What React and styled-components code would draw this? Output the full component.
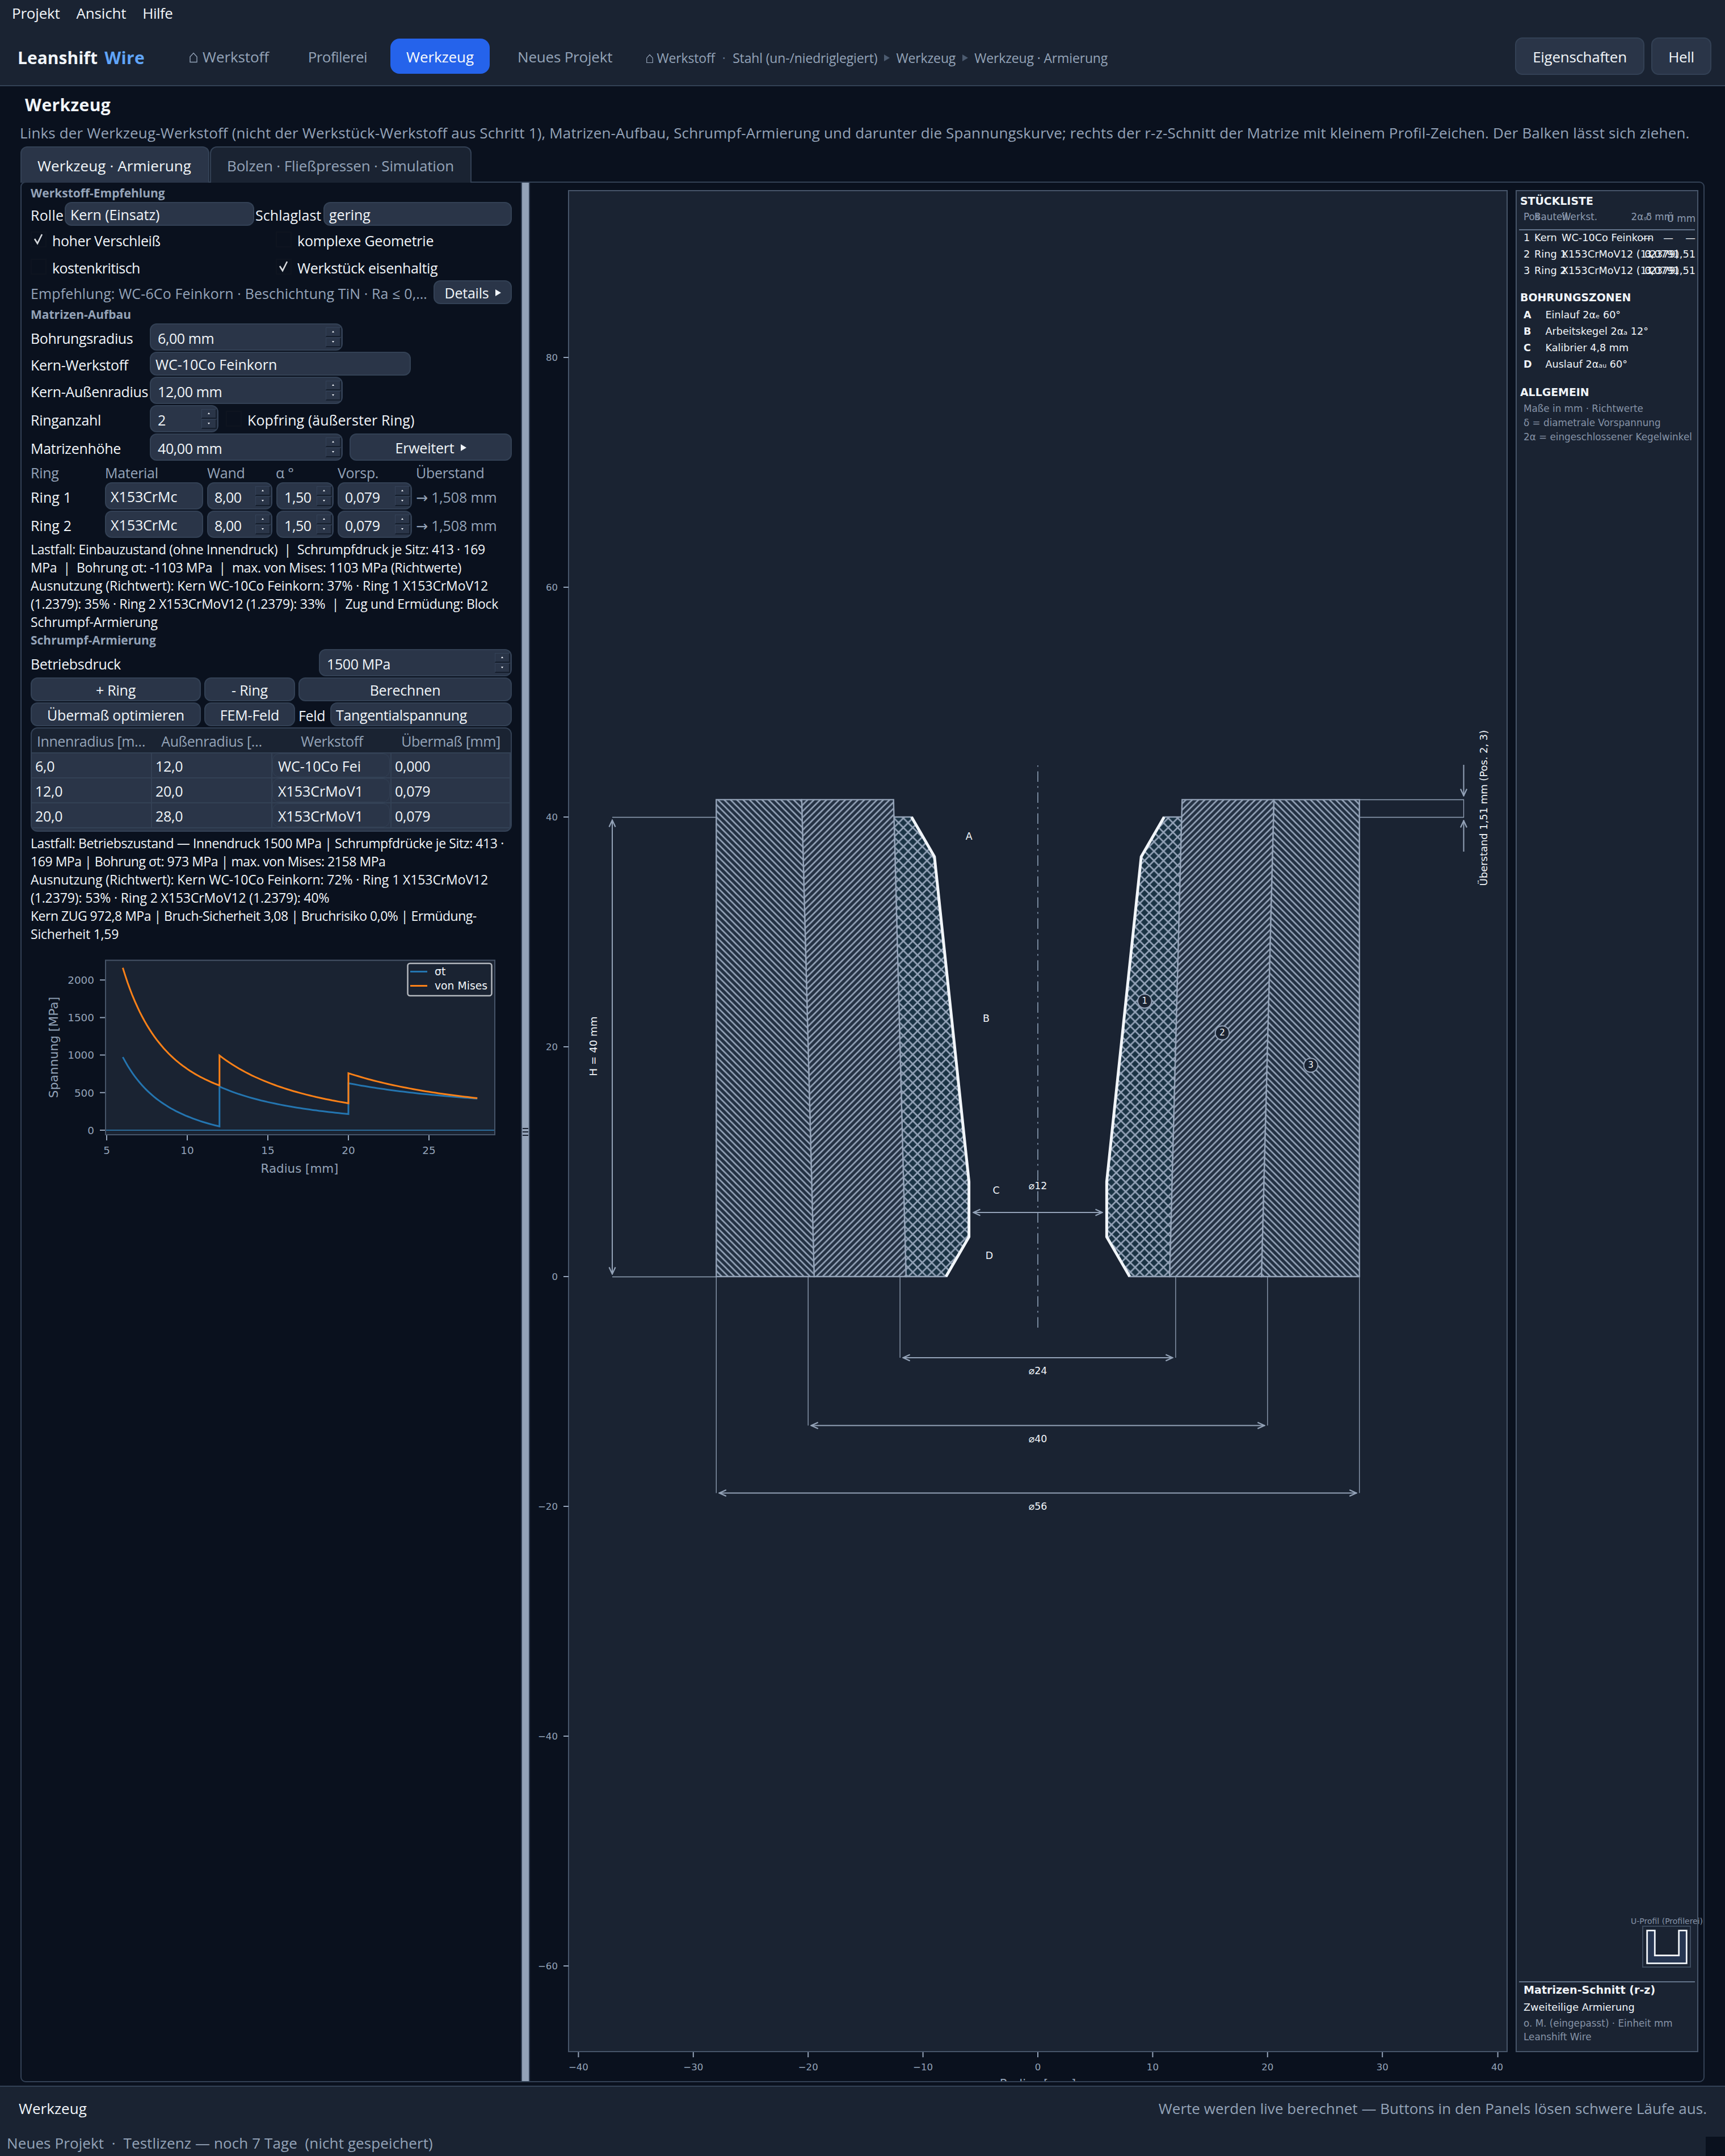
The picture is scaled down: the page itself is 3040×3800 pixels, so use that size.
import styled, { createGlobalStyle } from "styled-components";

const GlobalStyle = createGlobalStyle`
  * {
    box-sizing: border-box;
  }

  body {
    margin: 0;
    background: #0a111e;
    color: #f1f5f9;
    font-family: "Open Sans", "Noto Sans", "DejaVu Sans", sans-serif;
    font-size: 26px;
  }
`;

/* Window frame */
const Window = styled.div`
  width: 3040px;
  height: 3800px;
  display: flex;
  flex-direction: column;
  overflow: hidden;
  white-space: pre;
`;

const MenuBar = styled.div`
  height: 48px;
  padding: 0 0 2px 21px;
  display: flex;
  align-items: center;
  gap: 29px;
  background: #1a2332;
`;

const MenuItem = styled.span`
  letter-spacing: ${(props) => props.$ls || -0.2}px;
`;

const NavBar = styled.nav`
  height: 104px;
  padding: 0 24px 0 31px;
  display: flex;
  align-items: center;
  background: #1a2332;
  border-bottom: 2px solid #334155;
`;

const Brand = styled.div`
  width: 257px;
  font-size: 30px;
  font-weight: 700;
  letter-spacing: 0;
  padding-top: 4px;

  span {
    color: #60a5fa;
    margin-left: 4px;
    letter-spacing: 0.4px;
  }
`;

const NavItem = styled.div`
  height: 62px;
  padding: 2px ${(props) => props.$pad || 28}px 0;
  margin-right: ${(props) => props.$gap || 12}px;
  display: flex;
  align-items: center;
  border-radius: 16px;
  letter-spacing: ${(props) => props.$ls || -0.1}px;
  background: ${(props) => (props.$active ? "#2563eb" : "transparent")};
  color: ${(props) => (props.$active ? "#f8fafc" : "#94a3b8")};
`;

const House = styled.svg`
  width: ${(props) => props.$size || 16}px;
  height: ${(props) => (props.$size || 16) + 3}px;
  margin: 3px ${(props) => props.$gap || 8}px 0 0;
  fill: none;
  stroke: #94a3b8;
  stroke-width: 1.4;
`;

const Crumbs = styled.div`
  display: flex;
  align-items: center;
  flex: 1;
  font-size: 23px;
  color: #94a3b8;
  letter-spacing: -0.15px;
  padding-top: 5px;
`;

const CrumbDot = styled.span`
  width: 31px;
  text-align: center;
  color: #64748b;
`;

const CrumbArrow = styled.span`
  width: 0;
  height: 0;
  margin: 0 11px 0 12px;
  border-left: 10px solid #4c5b70;
  border-top: 6px solid transparent;
  border-bottom: 6px solid transparent;
`;

const TopButton = styled.button`
  height: 66px;
  width: ${(props) => props.$w}px;
  margin-left: 12px;
  padding: 1px 0 0;
  border: 2px solid #334155;
  border-radius: 13px;
  background: #2a3548;
  color: #f1f5f9;
  font: inherit;
  letter-spacing: -0.3px;
`;

const PageTitle = styled.h1`
  margin: 0;
  padding-left: 44px;
  height: 64px;
  line-height: 66px;
  font-size: 30px;
  letter-spacing: 0.4px;
`;

const Lead = styled.p`
  margin: 0 0 6px;
  padding-left: 35px;
  height: 36px;
  line-height: 36px;
  color: #94a3b8;
  letter-spacing: 0.15px;
`;

/* Tabs and the framed pane below them */
const Tabs = styled.div`
  position: relative;
  z-index: 1;
  display: flex;
  gap: 1px;
  height: 64px;
  padding-left: 36px;
`;

const Tab = styled.div`
  width: ${(props) => props.$w}px;
  padding: 2px 0 0 28px;
  line-height: 60px;
  border: 2px solid #334155;
  border-bottom: 0;
  border-radius: 12px 12px 0 0;
  background: ${(props) => (props.$active ? "#2a3548" : "#1a2332")};
  color: ${(props) => (props.$active ? "#f1f5f9" : "#94a3b8")};
  letter-spacing: ${(props) => (props.$active ? 0.1 : -0.16)}px;
`;

const Pane = styled.main`
  height: 3350px;
  margin: -2px 36px 6px;
  display: flex;
  border: 2px solid #334155;
  border-radius: 9px;
  overflow: hidden;
`;

const Controls = styled.section`
  width: 880px;
  padding: 0 16px;
  font-size: 25px;
  letter-spacing: -0.25px;
`;

const SectionTitle = styled.h2`
  margin: 0;
  height: 34px;
  line-height: 36px;
  font-size: 21px;
  letter-spacing: 0;
  color: #94a3b8;
`;

const FormRow = styled.div`
  display: grid;
  grid-template-columns: ${(props) => props.$cols};
  height: ${(props) => props.$h || 48}px;
  margin-bottom: ${(props) => (props.$flush ? 0 : 2)}px;
  align-items: center;
`;

const Label = styled.span`
  padding-top: 3px;
  letter-spacing: ${(props) => props.$ls || -0.3}px;
  padding-left: ${(props) => props.$pad || 0}px;
  color: ${(props) => (props.$muted ? "#94a3b8" : "#f1f5f9")};
`;

const Select = styled.div`
  height: ${(props) => props.$h || 42}px;
  width: ${(props) => (props.$w ? `${props.$w}px` : "auto")};
  padding: 2px 30px 0 8px;
  display: flex;
  align-items: center;
  border: 2px solid #334155;
  border-radius: 12px;
  background: #2a3548;
  letter-spacing: ${(props) => props.$ls || -0.05}px;
`;

const SpinBox = styled.div`
  height: 48px;
  width: ${(props) => props.$w}px;
  padding: 0 1px 0 ${(props) => props.$pad || 12}px;
  display: flex;
  align-items: center;
  justify-content: space-between;
  border: 2px solid #334155;
  border-radius: 12px;
  background: #2a3548;
  letter-spacing: -0.4px;

  span {
    padding-top: 3px;
  }
`;

const Arrows = styled.div`
  width: 27px;
  display: flex;
  flex-direction: column;
  gap: 1px;
`;

const ArrowButton = styled.div`
  height: 17px;
  display: flex;
  align-items: center;
  justify-content: center;
  border: 1px solid #344258;
  border-right: 2px solid #151e2c;
  border-bottom: 2px solid #151e2c;
  background: #2a3548;

  &::after {
    content: "";
    border-left: 2.5px solid transparent;
    border-right: 2.5px solid transparent;
    border-bottom: ${(props) => (props.$down ? "0" : "3px solid #f1f5f9")};
    border-top: ${(props) => (props.$down ? "3px solid #f1f5f9" : "0")};
  }
`;

const CheckGrid = styled.div`
  display: grid;
  grid-template-columns: 432px 1fr;
  grid-auto-rows: 48px;
  margin-top: -2px;
`;

const Check = styled.label`
  display: flex;
  align-items: center;
  gap: 10px;
  letter-spacing: ${(props) => props.$ls || -0.3}px;

  span {
    padding-top: 3px;
  }
`;

const Box = styled.svg`
  width: 28px;
  height: 28px;
  border: 2px solid #0e1420;
  fill: none;
  stroke: #d6d9dd;
  stroke-width: 2.6;
  flex: none;
`;

const PushButton = styled.button`
  height: ${(props) => props.$h || 42}px;
  width: ${(props) => (props.$w ? `${props.$w}px` : "100%")};
  padding: 2px 0 0;
  display: flex;
  align-items: center;
  justify-content: center;
  gap: 11px;
  border: 2px solid #334155;
  border-radius: 12px;
  background: #2a3548;
  color: #f1f5f9;
  font: inherit;
  letter-spacing: -0.2px;
`;

const Caret = styled.i`
  border-left: 10px solid #f1f5f9;
  border-top: 6px solid transparent;
  border-bottom: 6px solid transparent;
`;

const Report = styled.p`
  margin: 0 0 -2px;
  padding-top: ${(props) => props.$top || 2}px;
  font-size: 23px;
  line-height: 32px;
`;

const Line = styled.span`
  display: block;
  letter-spacing: ${(props) => props.$ls || 0}px;
`;

const ButtonRow = styled.div`
  display: flex;
  align-items: center;
  gap: 6px;
  margin-bottom: 2px;
`;

/* Ring table */
const Table = styled.div`
  height: 184px;
  border: 2px solid #334155;
  border-radius: 12px;
  background: #2a3548;
  overflow: hidden;
`;

const TableRow = styled.div`
  display: grid;
  grid-template-columns: 212px 212px 210px 210px;
  height: 44px;
  border-bottom: 2px solid #334155;
`;

const HeadRow = styled(TableRow)`
  grid-template-columns: 212px 212px 210px 1fr;
  background: #1a2332;
  color: #94a3b8;
  letter-spacing: -0.4px;
`;

const HeadCell = styled.span`
  line-height: 44px;
  text-align: center;
  padding-right: ${(props) => props.$pull || 0}px;
`;

const Cell = styled.div`
  height: 42px;
  padding-left: ${(props) => (props.$combo ? 0 : 6)}px;
  line-height: 44px;
  border-right: 2px solid #334155;
  display: flex;
`;

const CellSelect = styled.div`
  width: 207px;
  height: 42px;
  line-height: 42px;
  padding-left: 9px;
  border: 1px solid #334155;
  border-radius: 12px;
  letter-spacing: 0;
`;

const StressSvg = styled.svg`
  display: block;
  width: 880px;
  height: 440px;
  margin-left: -16px;
  font-family: "DejaVu Sans", sans-serif;
  letter-spacing: 0;
`;

const Splitter = styled.div`
  width: 16px;
  height: 3346px;
  display: flex;
  flex-direction: column;
  align-items: center;
  justify-content: center;
  gap: 4px;
  background: #94a3b8;
  border: solid #334155;
  border-width: 0 2px;

  i {
    width: 10px;
    height: 2px;
    background: #1a2332;
  }
`;

const SectionSvg = styled.svg`
  display: block;
  width: 1737px;
  height: 3346px;
  flex: none;
  font-family: "DejaVu Sans", sans-serif;
`;

/* Parts list beside the drawing */
const PartsPanel = styled.aside`
  width: 322px;
  height: 3282px;
  margin-top: 13px;
  padding-bottom: 11px;
  display: flex;
  flex-direction: column;
  border: 2px solid #475569;
  background: #1a2332;
  font-family: "DejaVu Sans", sans-serif;
  font-size: 17.7px;
`;

const ListTitle = styled.h3`
  margin: ${(props) => props.$top || 1}px 0 0;
  padding-left: 6px;
  font-size: 18.9px;
  line-height: 33px;
`;

const PartRow = styled.div`
  display: grid;
  grid-template-columns: 19px 48px 121px 38px 38px 39px;
  padding-left: 12px;
  line-height: 28.8px;
  height: 28.8px;
`;

const PartHead = styled(PartRow)`
  height: 23px;
  line-height: 23px;
  margin-bottom: 10px;
  font-size: 16.8px;
  color: #8d9bb0;
`;

const Num = styled.span`
  display: flex;
  justify-content: flex-end;
  padding-top: ${(props) => props.$drop || 0}px;
`;

const Rule = styled.hr`
  width: 310px;
  margin: 0 0 ${(props) => props.$below || 0}px 4px;
  border: 0;
  border-top: 2px solid #64748b;
`;

const ZoneRow = styled.div`
  display: grid;
  grid-template-columns: 38.5px 1fr;
  padding-left: 12px;
  line-height: 28.8px;
  font-size: 17.6px;
`;

const Note = styled.div`
  padding-left: 12px;
  font-size: 16.8px;
  line-height: ${(props) => props.$lh || 25.4}px;
  color: #8693a7;
`;

const TitleBlock = styled.div`
  padding-left: 12px;
  line-height: 34px;

  strong {
    display: block;
    font-size: 19.1px;
    line-height: 27px;
  }
`;

const ProfileMark = styled.div`
  margin: auto 0 24px 201px;
  font-size: 14px;
  line-height: 15px;
  color: #8693a7;

  svg {
    display: block;
    margin-left: 20px;
  }
`;

/* Footer */
const Footer = styled.footer`
  height: 76px;
  padding: 1px 32px 0 33px;
  display: flex;
  align-items: center;
  justify-content: space-between;
  background: #1a2332;
  border-top: 2px solid #334155;
`;

const Hint = styled.span`
  color: #94a3b8;
  letter-spacing: 0.04px;
`;

const StatusBar = styled.div`
  height: 48px;
  padding-left: 12px;
  display: flex;
  justify-content: space-between;
  align-items: flex-end;
  line-height: 46px;
  background: #1a2332;
  color: #94a3b8;
  letter-spacing: 0.1px;
`;

const Grip = styled.div`
  width: 34px;
  height: 34px;
  background: #0a111e;
`;

const rings = ["Ring 1", "Ring 2"];

const tableRows = [
  ["6,0", "12,0", "WC-10Co Fei", "0,000"],
  ["12,0", "20,0", "X153CrMoV1", "0,079"],
  ["20,0", "28,0", "X153CrMoV1", "0,079"],
];

const parts = [
  ["1", "Kern", "WC-10Co Feinkorn", "—", "—", "—"],
  ["2", "Ring 1", "X153CrMoV12 (1.2379)", "3", "0,079", "1,51"],
  ["3", "Ring 2", "X153CrMoV12 (1.2379)", "3", "0,079", "1,51"],
];

const zones = [
  ["A", "Einlauf 2αₑ 60°"],
  ["B", "Arbeitskegel 2αₐ 12°"],
  ["C", "Kalibrier 4,8 mm"],
  ["D", "Auslauf 2αₐᵤ 60°"],
];

// Lamé constants per ring: sigma_t = a + b / r^2
const lame = [
  { from: 6, to: 12, a: -257.7, b: 44304 },
  { from: 12, to: 20, a: 9.7, b: 82128 },
  { from: 20, to: 28, a: 206.5, b: 167415 },
];

const tangential = (s, r) => s.a + s.b / (r * r);
const mises = (s, r) => Math.sqrt(s.a ** 2 + 3 * (s.b / (r * r)) ** 2) * 1.006;

function curve(fn) {
  const pts = [];
  lame.forEach((s) => {
    for (let i = 0; i <= 40; i++) {
      const r = s.from + ((s.to - s.from) * i) / 40;
      pts.push(`${(188 + 28.4 * (r - 5)).toFixed(1)},${(1992 - 0.1325 * fn(s, r)).toFixed(1)}`);
    }
  });
  return pts.join(" ");
}

function StressChart() {
  return (
    <StressSvg viewBox="38 1660 880 440" fill="none">
      <rect x="186" y="1692.5" width="686" height="307.5" fill="#1a2332" stroke="#475569" strokeWidth="2" />
      <path d="M187 1992H871" stroke="#2a6a98" strokeWidth="2" />
      <g stroke="#94a3b8" strokeWidth="2">
        {[0, 1, 2, 3, 4].map((i) => (
          <path key={i} d={`M176 ${1992 - i * 66.2}h9M${188 + i * 142} 2001v9`} />
        ))}
      </g>
      <g fill="#94a3b8" fontSize="18.4">
        {[0, 500, 1000, 1500, 2000].map((v, i) => (
          <text key={v} x="166" y={1998.7 - i * 66.2} textAnchor="end">{v}</text>
        ))}
        {[5, 10, 15, 20, 25].map((v, i) => (
          <text key={v} x={188 + i * 142} y="2033.7" textAnchor="middle">{v}</text>
        ))}
      </g>
      <g fill="#94a3b8" fontSize="21.4" textAnchor="middle">
        <text x="528" y="2067">Radius [mm]</text>
        <text transform="translate(102 1846) rotate(-90)" fontSize="21.8">Spannung [MPa]</text>
      </g>
      <polyline points={curve(tangential)} stroke="#2475b0" strokeWidth="3" />
      <polyline points={curve(mises)} stroke="#fb8118" strokeWidth="3" />
      <rect x="718.5" y="1698" width="148" height="57" rx="4" fill="#1a2332" stroke="#b4b8be" strokeWidth="2.5" />
      <path d="M723 1712.5h30" stroke="#2475b0" strokeWidth="3" />
      <path d="M723 1737.5h30" stroke="#fb8118" strokeWidth="3" />
      <g fill="#f1f5f9" fontSize="18.8">
        <text x="766" y="1718.5">σt</text>
        <text x="766" y="1744">von Mises</text>
      </g>
    </StressSvg>
  );
}

// Drawing scale: millimetres to canvas units
const px = (r) => 1829 + 20.24 * r;
const py = (z) => 2250 - 20.25 * z;
const poly = (pts, side) => pts.map(([r, z]) => `${px(r * side).toFixed(1)},${py(z).toFixed(1)}`).join(" ");

const bore = [[11, 40], [9, 36.54], [6, 8.26], [6, 3.46], [8, 0]];
const core = [[12.524, 40], ...bore, [11.476, 0]];
const ringOne = [[12.563, 41.51], [20.563, 41.51], [19.476, 0], [11.476, 0]];
const ringTwo = [[20.563, 41.51], [28, 41.51], [28, 0], [19.476, 0]];

function Dimension({ x1, y1, x2, y2 }) {
  return <path d={`M${x1} ${y1}L${x2} ${y2}`} markerStart="url(#tip)" markerEnd="url(#tip)" />;
}

function SectionDrawing() {
  const widths = [[12, 2393, "⌀24"], [20, 2512.5, "⌀40"], [28, 2631.5, "⌀56"]];
  const balloons = [["1", 2017.3, 1764.5], ["2", 2154, 1820.5], ["3", 2310, 1877.5]];
  const letters = [["A", 1707.7, 1473.5], ["B", 1738, 1795], ["C", 1755.6, 2098], ["D", 1743.4, 2213]];

  return (
    <SectionSvg viewBox="934 322 1737 3346" fill="none">
      <defs>
        <pattern id="rise" width="11.11" height="11.11" patternUnits="userSpaceOnUse">
          <path d="M-2 2L2 -2M-2 13.11L13.11 -2M9.11 13.11L13.11 9.11" stroke="#94a3b8" strokeWidth="2.7" />
        </pattern>
        <pattern id="fall" width="11.11" height="11.11" patternUnits="userSpaceOnUse">
          <path d="M-2 9.11L2 13.11M-2 -2L13.11 13.11M9.11 -2L13.11 2" stroke="#94a3b8" strokeWidth="2.7" />
        </pattern>
        <pattern id="cross" width="16.67" height="16.67" patternUnits="userSpaceOnUse">
          <path
            d="M-2 2L2 -2M-2 18.67L18.67 -2M14.67 18.67L18.67 14.67M-2 14.67L2 18.67M-2 -2L18.67 18.67M14.67 -2L18.67 2"
            stroke="#94a3b8"
            strokeWidth="2.7"
          />
        </pattern>
        <marker id="tip" viewBox="-14 -7 15 14" refX="0" refY="0" markerWidth="15" markerHeight="14" markerUnits="userSpaceOnUse" orient="auto-start-reverse">
          <path d="M-12.5 -5.5L-0.5 0L-12.5 5.5" fill="none" stroke="#94a3b8" strokeWidth="2.2" />
        </marker>
      </defs>

      <rect x="1002" y="336" width="1654" height="3280" fill="#1a2332" stroke="#475569" strokeWidth="2" />

      {/* Axis ticks */}
      <g stroke="#94a3b8" strokeWidth="2">
        {[80, 60, 40, 20, 0, -20, -40, -60].map((z) => (
          <path key={z} d={`M993 ${py(z)}h9`} />
        ))}
        {[-40, -30, -20, -10, 0, 10, 20, 30, 40].map((r) => (
          <path key={r} d={`M${px(r) + (r > 30 ? 1 : 0)} 3617v9`} />
        ))}
      </g>
      <g fill="#94a3b8" fontSize="16.6">
        {[80, 60, 40, 20, 0, -20, -40, -60].map((z) => (
          <text key={z} x="983" y={py(z) + 6} textAnchor="end">{String(z).replace("-", "−")}</text>
        ))}
        {[-40, -30, -20, -10, 0, 10, 20, 30, 40].map((r) => (
          <text key={r} x={px(r)} y="3648.5" textAnchor="middle">{String(r).replace("-", "−")}</text>
        ))}
        <text x="1829" y="3680" fontSize="21" textAnchor="middle">Radius [mm]</text>
      </g>

      {/* Both halves of the die */}
      {[-1, 1].map((side) => (
        <g key={side} stroke="#94a3b8" strokeWidth="2.4">
          <polygon points={poly(core, side)} fill="#1a3344" stroke="none" />
          <polygon points={poly(core, side)} fill="url(#cross)" />
          <polygon points={poly(ringOne, side)} fill="#253244" stroke="none" />
          <polygon points={poly(ringOne, side)} fill="url(#rise)" />
          <polygon points={poly(ringTwo, side)} fill="#233143" stroke="none" />
          <polygon points={poly(ringTwo, side)} fill="url(#fall)" />
          <polyline points={poly(bore, side)} stroke="#f1f5f9" strokeWidth="5" strokeLinejoin="round" />
        </g>
      ))}

      <path d="M1829 2340V1349" stroke="#76869b" strokeWidth="2" strokeDasharray="18.5 8 3 7.5" />

      {/* Dimension lines */}
      <g stroke="#94a3b8" strokeWidth="1.3">
        <path d="M1262 1440.5H1079M1262 2250.5H1079" />
        <path d="M2396 1409.5H2579.5V1440.5H2396" />
        {widths.map(([r, y]) => (
          <path key={r} d={`M${px(-r)} 2250V${y}M${px(r)} 2250V${y}`} />
        ))}
      </g>
      <g stroke="#94a3b8" strokeWidth="2">
        <Dimension x1={1079} y1={1445} x2={1079} y2={2246} />
        <Dimension x1={1715} y1={2137} x2={1943} y2={2137} />
        {widths.map(([r, y]) => (
          <Dimension key={r} x1={px(-r) + 5} y1={y} x2={px(r) - 5} y2={y} />
        ))}
        <path d="M2579.5 1348V1403" markerEnd="url(#tip)" />
        <path d="M2579.5 1501V1446" markerEnd="url(#tip)" />
      </g>

      <g fill="#f1f5f9" fontSize="17.4" textAnchor="middle">
        {letters.map(([t, x, y]) => (
          <text key={t} x={x} y={y + 6}>{t}</text>
        ))}
        <text x="1829" y="2096">⌀12</text>
        {widths.map(([r, y, t]) => (
          <text key={t} x="1829" y={y + 29}>{t}</text>
        ))}
        <text transform="translate(1052 1844) rotate(-90)" fontSize="18.2">H = 40 mm</text>
        <text transform="translate(2621 1424) rotate(-90)" fontSize="17.9">Überstand 1,51 mm (Pos. 2, 3)</text>
      </g>

      {balloons.map(([t, x, y]) => (
        <g key={t}>
          <circle cx={x} cy={y} r="12.3" fill="#1a2332" stroke="#94a3b8" strokeWidth="2" />
          <text x={x} y={y + 4.5} fontSize="15" textAnchor="middle" fill="#f1f5f9">{t}</text>
        </g>
      ))}
    </SectionSvg>
  );
}

function Spin({ value, w, pad }) {
  return (
    <SpinBox $w={w} $pad={pad}>
      <span>{value}</span>
      <Arrows>
        <ArrowButton />
        <ArrowButton $down />
      </Arrows>
    </SpinBox>
  );
}

function CheckBox({ label, checked, ls }) {
  return (
    <Check $ls={ls}>
      <Box viewBox="0 0 24 24">{checked && <path d="M5 11L10 19L18 3" />}</Box>
      <span>{label}</span>
    </Check>
  );
}

function Home({ size, gap }) {
  return (
    <House viewBox="0 0 16 19" $size={size} $gap={gap}>
      <path d="M2 17.5V8L8 1.5L14 8V17.5Z" />
    </House>
  );
}

export default function App() {
  return (
    <>
      <GlobalStyle />
      <Window>
        <MenuBar>
          <MenuItem>Projekt</MenuItem>
          <MenuItem>Ansicht</MenuItem>
          <MenuItem $ls={-0.5}>Hilfe</MenuItem>
        </MenuBar>

        <NavBar>
          <Brand>Leanshift<span> Wire</span></Brand>
          <NavItem $pad={45} $gap={-20}><Home size={16} gap={8} />Werkstoff</NavItem>
          <NavItem $pad={44} $gap={-3} $ls={-0.6}>Profilerei</NavItem>
          <NavItem $active $gap={49}>Werkzeug</NavItem>
          <NavItem $pad={0.1} $gap={59} $ls={-0.2}>Neues Projekt</NavItem>
          <Crumbs>
            <Home size={14} gap={5} />
            Werkstoff<CrumbDot>·</CrumbDot>Stahl (un-/niedriglegiert)
            <CrumbArrow />Werkzeug<CrumbArrow />Werkzeug · Armierung
          </Crumbs>
          <TopButton $w={228}>Eigenschaften</TopButton>
          <TopButton $w={106}>Hell</TopButton>
        </NavBar>

        <PageTitle>Werkzeug</PageTitle>
        <Lead>
          Links der Werkzeug-Werkstoff (nicht der Werkstück-Werkstoff aus Schritt 1), Matrizen-Aufbau, Schrumpf-Armierung und darunter die Spannungskurve; rechts der r-z-Schnitt der Matrize mit kleinem Profil-Zeichen. Der Balken lässt sich ziehen.
        </Lead>

        <Tabs>
          <Tab $active $w={333}>Werkzeug · Armierung</Tab>
          <Tab $w={461}>Bolzen · Fließpressen · Simulation</Tab>
        </Tabs>

        <Pane>
          <Controls>
            <SectionTitle>Werkstoff-Empfehlung</SectionTitle>
            <FormRow $cols="60px 334px 122px 332px" $h={42}>
              <Label $ls={0.2}>Rolle</Label>
              <Select>Kern (Einsatz)</Select>
              <Label $pad={2} $ls={0.05}>Schlaglast</Label>
              <Select>gering</Select>
            </FormRow>
            <CheckGrid>
              <CheckBox label="hoher Verschleiß" checked ls={-0.4} />
              <CheckBox label="komplexe Geometrie" ls={-0.24} />
              <CheckBox label="kostenkritisch" ls={-0.54} />
              <CheckBox label="Werkstück eisenhaltig" checked ls={-0.33} />
            </CheckGrid>
            <FormRow $cols="710px 138px" $h={42} $flush>
              <Label $muted $ls={0.12}>Empfehlung: WC-6Co Feinkorn · Beschichtung TiN · Ra ≤ 0,…</Label>
              <PushButton>Details<Caret /></PushButton>
            </FormRow>

            <SectionTitle>Matrizen-Aufbau</SectionTitle>
            <FormRow $cols="210px 340px">
              <Label $ls={-0.4}>Bohrungsradius</Label>
              <Spin value="6,00 mm" />
            </FormRow>
            <FormRow $cols="210px 460px" $h={42}>
              <Label>Kern-Werkstoff</Label>
              <Select>WC-10Co Feinkorn</Select>
            </FormRow>
            <FormRow $cols="210px 340px">
              <Label>Kern-Außenradius</Label>
              <Spin value="12,00 mm" />
            </FormRow>
            <FormRow $cols="210px 134px 1fr">
              <Label>Ringanzahl</Label>
              <Spin value="2" w={121} />
              <CheckBox label="Kopfring (äußerster Ring)" ls={0.1} />
            </FormRow>
            <FormRow $cols="210px 352px 286px" $flush>
              <Label>Matrizenhöhe</Label>
              <Spin value="40,00 mm" w={340} />
              <PushButton $h={48}>Erweitert<Caret /></PushButton>
            </FormRow>

            <FormRow $cols="131px 180px 121px 109px 138px 1fr" $h={38} $flush>
              <Label $muted>Ring</Label>
              <Label $muted>Material</Label>
              <Label $muted>Wand</Label>
              <Label $muted>α °</Label>
              <Label $muted>Vorsp.</Label>
              <Label $muted>Überstand</Label>
            </FormRow>
            {rings.map((ring) => (
              <FormRow key={ring} $cols="131px 180px 122px 108px 138px 1fr">
                <Label $ls={0.1}>{ring}</Label>
                <Select $h={48} $w={173}>X153CrMc</Select>
                <Spin value="8,00" w={115} pad={11} />
                <Spin value="1,50" w={101} />
                <Spin value="0,079" w={131} pad={11} />
                <Label $muted $ls={-0.15}>→ 1,508 mm</Label>
              </FormRow>
            ))}
            <Report>
              <Line $ls={-0.35}>Lastfall: Einbauzustand (ohne Innendruck)  |  Schrumpfdruck je Sitz: 413 · 169</Line>
              <Line $ls={-0.35}>MPa  |  Bohrung σt: -1103 MPa  |  max. von Mises: 1103 MPa (Richtwerte)</Line>
              <Line $ls={-0.1}>Ausnutzung (Richtwert): Kern WC-10Co Feinkorn: 37% · Ring 1 X153CrMoV12</Line>
              <Line $ls={-0.27}>(1.2379): 35% · Ring 2 X153CrMoV12 (1.2379): 33%  |  Zug und Ermüdung: Block</Line>
              <Line $ls={-0.1}>Schrumpf-Armierung</Line>
            </Report>

            <SectionTitle>Schrumpf-Armierung</SectionTitle>
            <FormRow $cols="508px 340px">
              <Label>Betriebsdruck</Label>
              <Spin value="1500 MPa" />
            </FormRow>
            <ButtonRow>
              <PushButton $w={300}>+ Ring</PushButton>
              <PushButton $w={160}>- Ring</PushButton>
              <PushButton $w={376}>Berechnen</PushButton>
            </ButtonRow>
            <ButtonRow>
              <PushButton $w={300}>Übermaß optimieren</PushButton>
              <PushButton $w={160}>FEM-Feld</PushButton>
              <FormRow $cols="56px 320px" $h={42} $flush>
                <Label>Feld</Label>
                <Select $ls={-0.36}>Tangentialspannung</Select>
              </FormRow>
            </ButtonRow>

            <Table>
              <HeadRow>
                <HeadCell $pull={3}>Innenradius [m…</HeadCell>
                <HeadCell $pull={2}>Außenradius […</HeadCell>
                <HeadCell>Werkstoff</HeadCell>
                <HeadCell $pull={1}>Übermaß [mm]</HeadCell>
              </HeadRow>
              {tableRows.map((row, i) => (
                <TableRow key={i}>
                  <Cell>{row[0]}</Cell>
                  <Cell>{row[1]}</Cell>
                  <Cell $combo><CellSelect>{row[2]}</CellSelect></Cell>
                  <Cell>{row[3]}</Cell>
                </TableRow>
              ))}
            </Table>
            <Report $top={4}>
              <Line $ls={-0.4}>Lastfall: Betriebszustand — Innendruck 1500 MPa | Schrumpfdrücke je Sitz: 413 ·</Line>
              <Line $ls={-0.45}>169 MPa | Bohrung σt: 973 MPa | max. von Mises: 2158 MPa</Line>
              <Line $ls={-0.1}>Ausnutzung (Richtwert): Kern WC-10Co Feinkorn: 72% · Ring 1 X153CrMoV12</Line>
              <Line $ls={-0.12}>(1.2379): 53% · Ring 2 X153CrMoV12 (1.2379): 40%</Line>
              <Line $ls={-0.5}>Kern ZUG 972,8 MPa | Bruch-Sicherheit 3,08 | Bruchrisiko 0,0% | Ermüdung-</Line>
              <Line $ls={-0.2}>Sicherheit 1,59</Line>
            </Report>
            <StressChart />
          </Controls>

          <Splitter><i /><i /><i /></Splitter>

          <SectionDrawing />

          <PartsPanel>
            <ListTitle>STÜCKLISTE</ListTitle>
            <PartHead>
              <span>Pos</span>
              <span>Bauteil</span>
              <span>Werkst.</span>
              <Num>2αₛ°</Num>
              <Num>δ mm</Num>
              <Num $drop={3}>Ü mm</Num>
            </PartHead>
            <Rule $below={-1} />
            {parts.map((p) => (
              <PartRow key={p[0]}>
                <span>{p[0]}</span>
                <span>{p[1]}</span>
                <span>{p[2]}</span>
                <Num>{p[3]}</Num>
                <Num>{p[4]}</Num>
                <Num>{p[5]}</Num>
              </PartRow>
            ))}

            <ListTitle $top={17}>BOHRUNGSZONEN</ListTitle>
            {zones.map(([key, text]) => (
              <ZoneRow key={key}>
                <b>{key}</b>
                <span>{text}</span>
              </ZoneRow>
            ))}

            <ListTitle $top={18}>ALLGEMEIN</ListTitle>
            <Note>Maße in mm · Richtwerte</Note>
            <Note>δ = diametrale Vorspannung</Note>
            <Note>2α = eingeschlossener Kegelwinkel</Note>

            <ProfileMark>
              U-Profil (Profilerei)
              <svg width="86" height="74" fill="none">
                <rect x="1" y="1" width="84" height="72" stroke="#3d4b5e" strokeWidth="2" />
                <path d="M8.7 8.7H22.3V52.5H64.7V8.7H78.3V66.3H8.7Z" fill="#263652" stroke="#f1f5f9" strokeWidth="2.8" />
              </svg>
            </ProfileMark>

            <Rule />
            <TitleBlock>
              <strong>Matrizen-Schnitt (r-z)</strong>
              Zweiteilige Armierung
            </TitleBlock>
            <Note $lh={22}>o. M. (eingepasst) · Einheit mm</Note>
            <Note $lh={27}>Leanshift Wire</Note>
          </PartsPanel>
        </Pane>

        <Footer>
          <span>Werkzeug</span>
          <Hint>Werte werden live berechnet — Buttons in den Panels lösen schwere Läufe aus.</Hint>
        </Footer>
        <StatusBar>
          Neues Projekt  ·  Testlizenz — noch 7 Tage  (nicht gespeichert)
          <Grip />
        </StatusBar>
      </Window>
    </>
  );
}
